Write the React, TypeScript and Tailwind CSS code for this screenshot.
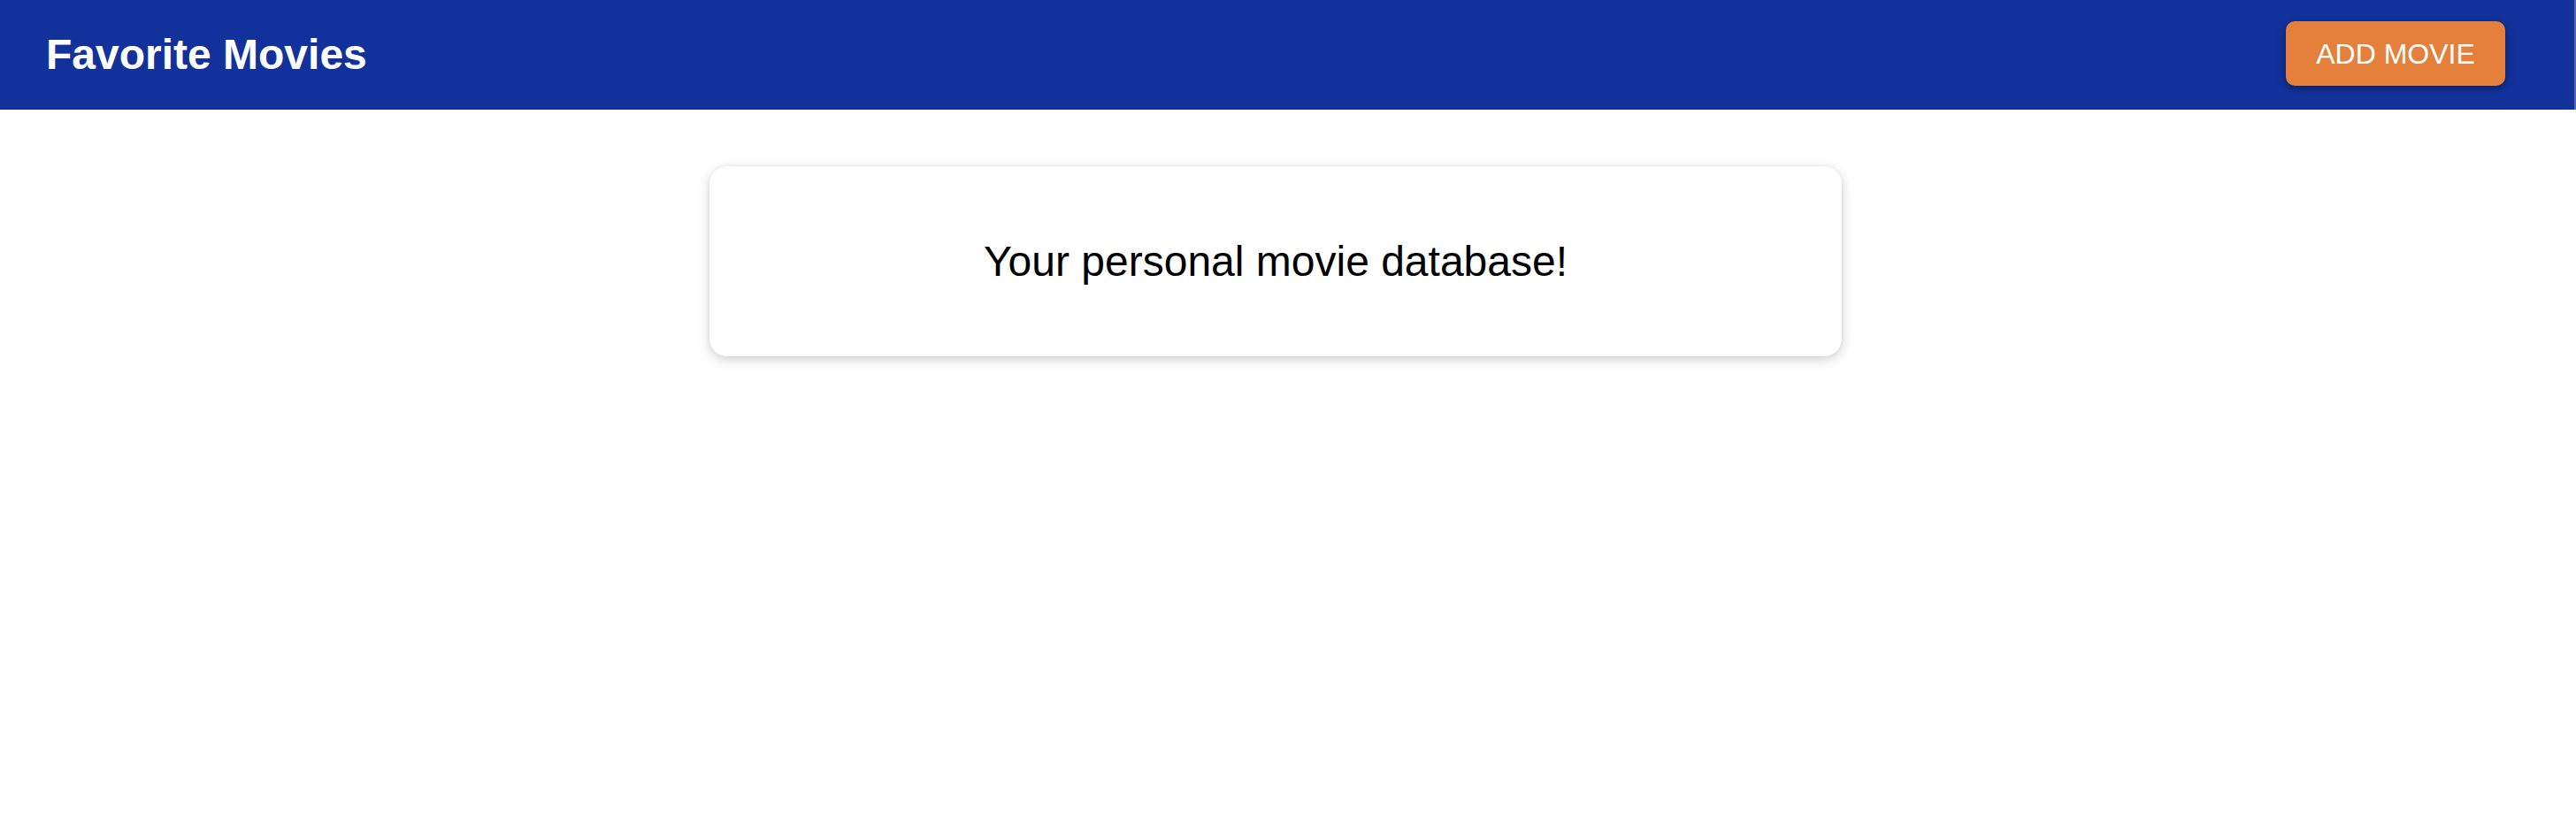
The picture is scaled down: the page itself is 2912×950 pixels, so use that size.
import React from "react";

export default function App() {
  return (
    <div className="min-h-[950px] bg-white font-['Liberation_Sans',Arial,sans-serif]">
      <header className="flex h-[124px] items-center justify-between border-r-2 border-[#5767ae] bg-[#12319a] pl-[52px] pr-[78px]">
        <h1 className="text-[48px] font-bold leading-none text-white">Favorite Movies</h1>
        <button className="mb-[3px] flex h-[73px] w-[248px] items-center justify-center rounded-[10px] bg-[#e57f3c] text-[32px] leading-none text-white shadow-[0_3px_10px_rgba(0,0,0,0.35)]">
          ADD MOVIE
        </button>
      </header>
      <main className="pt-[64px] pl-[802px]">
        <div className="w-[1280px] rounded-[20px] bg-white py-[80px] text-center shadow-[0_4px_14px_rgba(0,0,0,0.18),0_0_4px_rgba(0,0,0,0.06)]">
          <p className="text-[48px] leading-[55px] text-black">Your personal movie database!</p>
        </div>
      </main>
    </div>
  );
}
